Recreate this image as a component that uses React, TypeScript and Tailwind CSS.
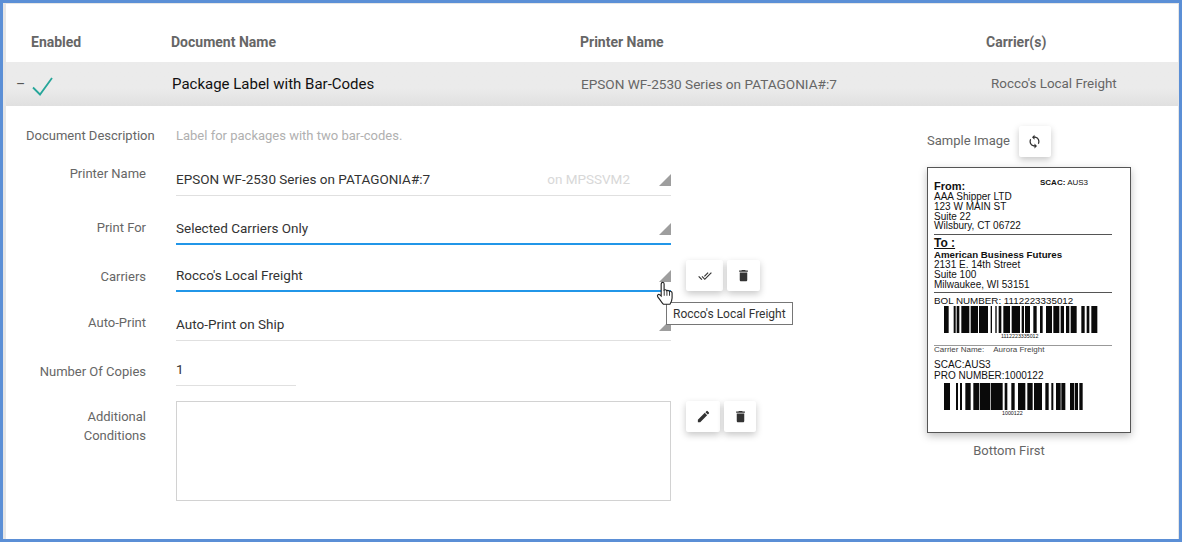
import { MdDelete, MdDoneAll, MdEdit, MdSync } from 'react-icons/md'

const bolBars = [
  [72, 14], [101, 6], [110, 8], [124, 24], [152, 22], [177, 27], [212, 4], [226, 4], [236, 8], [250, 20],
  [275, 25], [305, 7], [315, 15], [340, 10], [360, 8], [378, 18], [400, 18], [422, 10], [438, 10], [452, 18],
  [484, 10], [500, 8], [514, 18],
]

const proBars = [
  [72, 18], [108, 6], [120, 6], [136, 16], [160, 18], [180, 30], [212, 36], [254, 8], [274, 10], [294, 22],
  [322, 16], [342, 24], [376, 10], [394, 6], [408, 14], [424, 12], [450, 12], [464, 10], [478, 10],
]

function Barcode({ bars, width }: { bars: number[][]; width: number }) {
  const viewW = width * 3
  return (
    <svg width={width} height="27" viewBox={`72 0 ${viewW} 81`} className="block">
      {bars.map(([x, w]) => (
        <rect key={x} x={x} y="0" width={w} height="81" fill="#0a0a0a" />
      ))}
    </svg>
  )
}

function Triangle() {
  return <span className="w-0 h-0 border-l-[12px] border-b-[12px] border-l-transparent border-b-[#9e9e9e]" />
}

function IconButton({ children, width = 'w-[33px]' }: { children: React.ReactNode; width?: string }) {
  return (
    <button className={`${width} h-[31px] flex items-center justify-center bg-white rounded-[2px] text-[#333] shadow-[0_3px_7px_rgba(0,0,0,0.22)]`}>
      {children}
    </button>
  )
}

function Label({ children, top }: { children: React.ReactNode; top: string }) {
  return <div className={`w-[117px] shrink-0 text-right text-[13px] leading-[19px] text-[#666] ${top}`}>{children}</div>
}

function SelectField({ value, focused, extra }: { value: string; focused?: boolean; extra?: string }) {
  return (
    <div className={`ml-[30px] w-[495px] flex items-end justify-between text-[13.5px] text-[#333] ${focused ? 'border-b-2 border-[#2196e8]' : 'border-b border-[#e0e0e0]'}`}>
      <span className={`leading-[20px] ${focused ? 'mb-[5px]' : 'mb-[6px]'}`}>{value}</span>
      <span className={`flex items-end ${focused ? 'mb-[8px]' : 'mb-[9px]'}`}>
        {extra && <span className="text-[#d8d8d8] mr-[29px] leading-[20px] -mb-[3px]">{extra}</span>}
        <Triangle />
      </span>
    </div>
  )
}

export default function App() {
  return (
    <div className="w-[1182px] h-[542px] overflow-hidden border-[3px] border-[#5b8fd6] bg-[#e6e6e6] pl-[3px] pr-px pt-px font-['Roboto',sans-serif]">
      <div className="h-full bg-white">
        <div className="h-[58px] flex items-end pb-[10px] text-[14px] leading-[20px] font-bold text-[#666]">
          <div className="w-[165px] pl-[25px]">Enabled</div>
          <div className="w-[409px]">Document Name</div>
          <div className="w-[406px]">Printer Name</div>
          <div>Carrier(s)</div>
        </div>

        <div className="h-[44px] flex items-center bg-gradient-to-b from-[#ebebeb] from-60% to-[#e0e0e0]">
          <div className="w-[166px] flex items-center pl-[10px]">
            <span className="w-[15px] text-[14px] text-[#555] leading-none">–</span>
            <svg width="24" height="22" viewBox="0 0 24 22" fill="none" className="mt-[3px]">
              <path d="M2 12.5 L9 19.5 L21 3" stroke="#26a69a" strokeWidth="1.8" />
            </svg>
          </div>
          <div className="w-[409px] text-[15px] text-[#111]">Package Label with Bar-Codes</div>
          <div className="w-[410px] text-[13.6px] text-[#666]">EPSON WF-2530 Series on PATAGONIA#:7</div>
          <div className="text-[13.4px] text-[#666]">Rocco&apos;s Local Freight</div>
        </div>

        <div className="flex">
          <div className="w-[900px] pl-[23px]">
            <div className="h-[57px] flex pt-[20px] -ml-[3px] text-[13px] leading-[19px]">
              <div className="w-[130px] shrink-0 whitespace-nowrap text-[#666]">Document Description</div>
              <div className="ml-[20px] text-[#b0b0b0]">Label for packages with two bar-codes.</div>
            </div>

            <div className="h-[33px] flex">
              <Label top="mt-[1px]">Printer Name</Label>
              <SelectField value="EPSON WF-2530 Series on PATAGONIA#:7" extra="on MPSSVM2" />
            </div>

            <div className="h-[49px] flex">
              <Label top="mt-[22px]">Print For</Label>
              <SelectField value="Selected Carriers Only" focused />
            </div>

            <div className="h-[47px] flex">
              <Label top="mt-[22px]">Carriers</Label>
              <SelectField value="Rocco's Local Freight" focused />
              <div className="ml-[15px] mt-[15px] h-[31px] flex gap-[4px]">
                <IconButton width="w-[37px]"><MdDoneAll size={14} /></IconButton>
                <IconButton><MdDelete size={15} /></IconButton>
              </div>
            </div>

            <div className="h-[49px] flex">
              <Label top="mt-[21px]">Auto-Print</Label>
              <SelectField value="Auto-Print on Ship" />
            </div>

            <div className="h-[45px] flex">
              <Label top="mt-[21px]">Number Of Copies</Label>
              <div className="ml-[30px] w-[120px] flex items-end border-b border-[#e0e0e0] text-[13.5px] text-[#333]">
                <span className="leading-[20px] mb-[6px]">1</span>
              </div>
            </div>

            <div className="flex pt-[15px]">
              <Label top="mt-[6px]">Additional Conditions</Label>
              <div className="ml-[30px] w-[495px] h-[100px] border border-[#d2d2d2]" />
              <div className="ml-[15px] h-[31px] flex gap-[4px]">
                <IconButton width="w-[34px]"><MdEdit size={15} /></IconButton>
                <IconButton width="w-[32px]"><MdDelete size={15} /></IconButton>
              </div>
            </div>
          </div>

          <div className="pl-[21px]">
            <div className="flex items-center h-[31px] mt-[20px] gap-[9px]">
              <span className="text-[13px] text-[#666] -mt-[2px]">Sample Image</span>
              <IconButton width="w-[32px]"><MdSync size={15} /></IconButton>
            </div>

            <div className="mt-[10px] w-[204px] h-[266px] border border-[#555] shadow-[0_3px_8px_rgba(0,0,0,0.25)] bg-white px-[6px] pt-[13px] text-[10px] leading-[9.8px] text-[#111] font-['Liberation_Sans',sans-serif]">
              <div className="relative">
                <span className="absolute left-[106px] -top-[3px] text-[8px] leading-[9px]"><b>SCAC:</b> AUS3</span>
                <div className="text-[11px] leading-[11px] font-bold">From:</div>
                <div>AAA Shipper LTD</div>
                <div>123 W MAIN ST</div>
                <div>Suite 22</div>
                <div>Wilsbury, CT 06722</div>
              </div>
              <div className="mt-[3px] w-[178px] border-t border-[#555]" />
              <div className="mt-[1px] text-[12px] leading-[14px] font-bold underline">To :</div>
              <div className="font-bold text-[9.7px]">American Business Futures</div>
              <div>2131 E. 14th Street</div>
              <div>Suite 100</div>
              <div>Milwaukee, WI 53151</div>
              <div className="mt-[3px] w-[178px] border-t border-[#555]" />
              <div className="mt-[2px] text-[9.8px] leading-[11px]">BOL NUMBER: 1112223335012</div>
              <div className="ml-[10px]"><Barcode bars={bolBars} width={154} /></div>
              <div className="ml-[67px] mt-[1px] text-[5.3px] leading-[5px]">1112223335012</div>
              <div className="mt-[6px] w-[178px] border-t border-[#999]" />
              <div className="flex gap-[9px] -mt-[1px] text-[8px] leading-[10px] text-[#444]">
                <span>Carrier Name:</span>
                <span>Aurora Freight</span>
              </div>
              <div className="mt-[5px] leading-[10.5px]">SCAC:AUS3</div>
              <div className="leading-[10.5px]">PRO NUMBER:1000122</div>
              <div className="ml-[10px] mt-[2px]"><Barcode bars={proBars} width={139} /></div>
              <div className="ml-[68px] mt-[1px] text-[5.3px] leading-[5px]">1000122</div>
            </div>

            <div className="w-[164px] mt-[8px] text-center text-[13px] text-[#666]">Bottom First</div>
          </div>
        </div>
      </div>

      {/* tooltip and mouse pointer sit over the form */}
      <div className="absolute left-[666px] top-[302px] h-[23px] px-[6px] flex items-center bg-white border border-[#767676] text-[12px] text-[#333] font-['Roboto',sans-serif]">
        Rocco&apos;s Local Freight
      </div>
      <svg width="18" height="25" viewBox="0 0 16 22" className="absolute left-[656px] top-[281px]">
        <path
          d="M5 1.5 C6 .8 7.2 1.3 7.2 2.5 V8 C8 7.4 9.2 7.6 9.6 8.5 C10.4 8 11.6 8.3 11.9 9.2 C12.8 8.8 14.3 9.2 14.3 10.6 V15 C14.3 17.5 13.4 19 12.4 20.5 H6.5 C5.2 19 3.5 16.6 1.6 14 C.7 12.8 2 11.2 3.4 12.2 L4.6 13.2 V2.5 Z"
          fill="white"
          stroke="#222"
          strokeWidth="1"
        />
        <path d="M7.3 8 V13 M9.7 8.6 V13 M12 9.3 V13" stroke="#222" strokeWidth=".8" />
      </svg>
    </div>
  )
}
